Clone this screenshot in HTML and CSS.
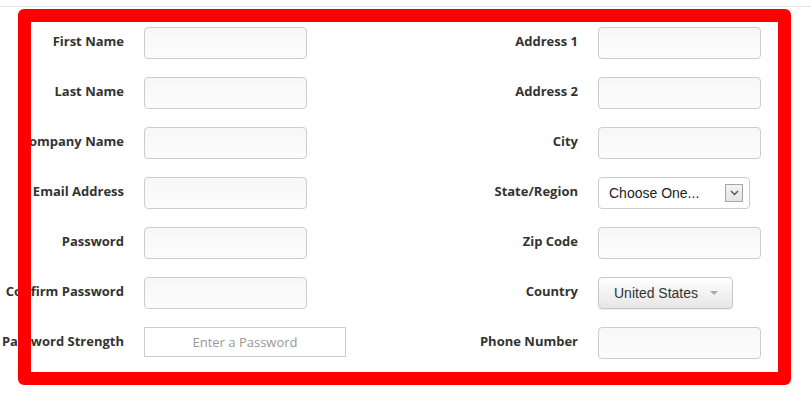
FILE: index.html
```html
<!DOCTYPE html>
<html lang="en">
<head>
  <meta charset="UTF-8" />
  <title>Register</title>
  <link rel="stylesheet" href="styles.css">
</head>
<body>
  <div class="topline"></div>

  <form class="signup">
    <label class="lbl" for="first">First Name</label>
    <input class="field" type="text" id="first" />
    <label class="lbl" for="addr1">Address 1</label>
    <input class="field" type="text" id="addr1" />

    <label class="lbl" for="last">Last Name</label>
    <input class="field" type="text" id="last" />
    <label class="lbl" for="addr2">Address 2</label>
    <input class="field" type="text" id="addr2" />

    <label class="lbl" for="company">Company Name</label>
    <input class="field" type="text" id="company" />
    <label class="lbl" for="city">City</label>
    <input class="field" type="text" id="city" />

    <label class="lbl" for="email">Email Address</label>
    <input class="field" type="text" id="email" />
    <label class="lbl">State/Region</label>
    <div class="select">
      <span>Choose One...</span>
      <span class="select-arrow">
        <svg width="9" height="6" viewBox="0 0 9 6"><path d="M1 1 L4.5 4.5 L8 1" fill="none" stroke="#555" stroke-width="1.4"/></svg>
      </span>
    </div>

    <label class="lbl" for="pass">Password</label>
    <input class="field" type="password" id="pass" />
    <label class="lbl" for="zip">Zip Code</label>
    <input class="field" type="text" id="zip" />

    <label class="lbl" for="pass2">Confirm Password</label>
    <input class="field" type="password" id="pass2" />
    <label class="lbl">Country</label>
    <div class="dropdown">United States <span class="caret"></span></div>

    <label class="lbl">Password Strength</label>
    <div class="strength">Enter a Password</div>
    <label class="lbl" for="phone">Phone Number</label>
    <input class="field" type="text" id="phone" />
  </form>

  <div class="highlight"></div>
</body>
</html>
```

FILE: styles.css
```css
* {
  box-sizing: border-box;
}
body {
  margin: 0;
  background: #fff;
  font-family: 'Open Sans', Arial, sans-serif;
  color: #333;
  position: relative;
  min-height: 401px;
  overflow: hidden;
}
.topline {
  height: 7px;
  border-bottom: 1px solid #e2e2e2;
}
.signup {
  display: grid;
  grid-template-columns: 124px 202px 212px 163px;
  grid-auto-rows: 32px;
  column-gap: 20px;
  row-gap: 18px;
  padding-top: 20px;
  align-items: center;
}
.lbl {
  font-weight: 700;
  font-size: 13px;
  text-align: right;
  white-space: nowrap;
  color: #333;
  direction: rtl;
  padding-bottom: 4px;
}
.field {
  width: 163px;
  height: 32px;
  border: 1px solid #ccc;
  border-radius: 4px;
  background: linear-gradient(#f7f7f7, #fcfcfc);
  font-size: 14px;
  padding: 0 8px;
}
.field:focus {
  outline: none;
}
.select {
  width: 152px;
  height: 32px;
  border: 1px solid #ccc;
  border-radius: 4px;
  background: #fff;
  display: flex;
  align-items: center;
  justify-content: space-between;
  padding: 0 6px 0 10px;
  font-family: Arial, 'Liberation Sans', sans-serif;
  font-size: 14px;
  color: #222;
}
.select-arrow {
  width: 18px;
  height: 18px;
  border: 1px solid #a6a6a6;
  background: linear-gradient(#f4f4f4, #e4e4e4);
  display: flex;
  align-items: center;
  justify-content: center;
}
.dropdown {
  width: 135px;
  height: 32px;
  border: 1px solid #c8c8c8;
  border-radius: 4px;
  background: linear-gradient(#fff, #e6e6e6);
  box-shadow: 0 1px 1px rgba(0,0,0,0.08);
  display: flex;
  align-items: center;
  gap: 12px;
  padding-left: 15px;
  font-family: Arial, 'Liberation Sans', sans-serif;
  font-size: 14px;
  color: #333;
}
.caret {
  width: 0;
  height: 0;
  border-left: 4px solid transparent;
  border-right: 4px solid transparent;
  border-top: 4px solid #aaa;
}
.strength {
  width: 202px;
  height: 30px;
  align-self: start;
  border: 1px solid #ccc;
  display: flex;
  align-items: center;
  justify-content: center;
  font-size: 13px;
  color: #999;
}
.highlight {
  position: absolute;
  left: 18px;
  top: 9px;
  width: 773px;
  height: 376px;
  border: 13px solid #f00;
  border-radius: 6px;
  pointer-events: none;
}
```
